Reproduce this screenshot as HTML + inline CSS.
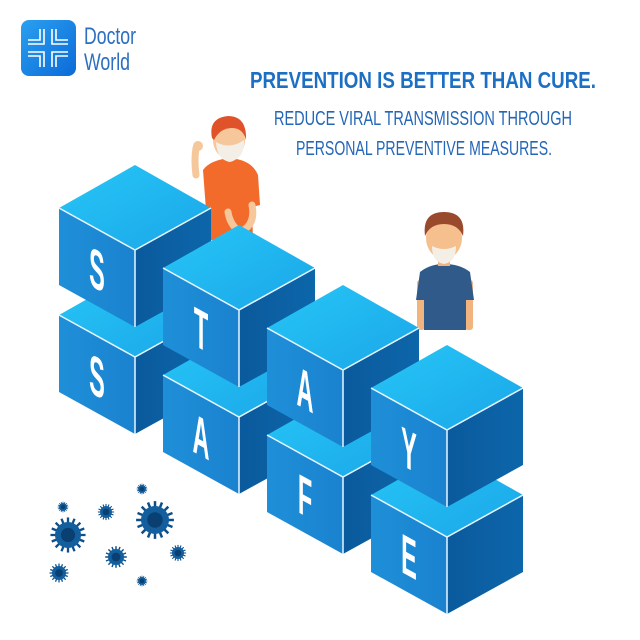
<!DOCTYPE html>
<html><head><meta charset="utf-8"><style>
html,body{margin:0;padding:0;background:#fff;width:640px;height:640px;overflow:hidden}
svg{display:block}
</style></head><body>
<svg width="640" height="640" viewBox="0 0 640 640" xmlns="http://www.w3.org/2000/svg">
<defs>
<linearGradient id="tg" x1="0" y1="0" x2="1" y2="1"><stop offset="0" stop-color="#27c6f7"/><stop offset="1" stop-color="#1aa6e8"/></linearGradient>
<linearGradient id="lg" x1="0" y1="0" x2="1" y2="0"><stop offset="0" stop-color="#1f8fd8"/><stop offset="1" stop-color="#1a82cf"/></linearGradient>
<linearGradient id="rg" x1="0" y1="0" x2="1" y2="0"><stop offset="0" stop-color="#0a5a9c"/><stop offset="1" stop-color="#0d66aa"/></linearGradient>
<linearGradient id="logo" x1="0" y1="0" x2="1" y2="1"><stop offset="0" stop-color="#2aa0f0"/><stop offset="1" stop-color="#0c6ad8"/></linearGradient>
<g id="cube">
<path d="M-76,-42 L0,-85 L76,-42 L0,0 Z" fill="url(#tg)"/>
<path d="M-76,-42 L0,0 L0,77 L-76,35 Z" fill="url(#lg)"/>
<path d="M0,0 L76,-42 L76,35 L0,77 Z" fill="url(#rg)"/>
<path d="M-76,-42 L0,0 L76,-42 M0,0 L0,77" stroke="#e8f7ff" stroke-width="1.5" fill="none"/>
</g>
<g id="virus" fill="#0d4f8a" stroke="#0d4f8a">
<g stroke-width="0.18">
<line x1="0" y1="-1.35" x2="0" y2="1.35"/><line x1="-1.35" y1="0" x2="1.35" y2="0"/>
<line x1="-0.95" y1="-0.95" x2="0.95" y2="0.95"/><line x1="-0.95" y1="0.95" x2="0.95" y2="-0.95"/>
<line x1="-0.5" y1="-1.25" x2="0.5" y2="1.25"/><line x1="-1.25" y1="-0.5" x2="1.25" y2="0.5"/>
<line x1="-0.5" y1="1.25" x2="0.5" y2="-1.25"/><line x1="-1.25" y1="0.5" x2="1.25" y2="-0.5"/>
</g>
<circle r="1" stroke="none" fill="#135f9e"/>
<circle r="0.55" stroke="none" fill="#0a3f72"/>
</g>
</defs>

<!-- logo -->
<rect x="21" y="20" width="55" height="56" rx="8" fill="url(#logo)"/>
<g stroke="#fff" stroke-width="1.6" fill="none">
<path d="M44,29 V44 H28 M40,29 V40 H28 M52,29 V44 H68 M56,29 V40 H68 M44,67 V52 H28 M40,67 V56 H28 M52,67 V52 H68 M56,67 V56 H68"/>
</g>
<text x="84" y="44" font-family="Liberation Sans, sans-serif" font-size="24" fill="#2c6fc0" textLength="52" lengthAdjust="spacingAndGlyphs">Doctor</text>
<text x="84" y="70" font-family="Liberation Sans, sans-serif" font-size="24" fill="#2c6fc0" textLength="46" lengthAdjust="spacingAndGlyphs">World</text>

<!-- headings -->
<text x="250" y="88" font-family="Liberation Sans, sans-serif" font-weight="bold" font-size="23" fill="#1d6fc4" textLength="346" lengthAdjust="spacingAndGlyphs">PREVENTION IS BETTER THAN CURE.</text>
<text x="274" y="125" font-family="Liberation Sans, sans-serif" font-size="20" fill="#2466b8" textLength="298" lengthAdjust="spacingAndGlyphs">REDUCE VIRAL TRANSMISSION THROUGH</text>
<text x="296" y="155" font-family="Liberation Sans, sans-serif" font-size="20" fill="#2466b8" textLength="256" lengthAdjust="spacingAndGlyphs">PERSONAL PREVENTIVE MEASURES.</text>

<!-- orange man -->
<g>
<path d="M196,175 Q194,160 196,148" stroke="#f6c79a" stroke-width="7" fill="none" stroke-linecap="round"/>
<circle cx="198" cy="146" r="5" fill="#f6c79a"/>
<path d="M203,170 Q210,160 230,158 Q252,160 258,175 L260,205 L252,207 L253,240 L208,240 L206,210 Z" fill="#f26b2a"/>
<path d="M252,205 Q256,225 240,232 Q230,225 228,212" stroke="#f6c79a" stroke-width="7" fill="none" stroke-linecap="round"/>
<ellipse cx="229" cy="140" rx="16" ry="19" fill="#f6c79a"/>
<path d="M212,138 Q208,118 228,116 Q247,116 246,140 Q243,128 232,128 Q220,128 214,140 Z" fill="#e0532a"/>
<path d="M216,142 Q230,150 244,140 Q245,158 230,162 Q217,160 216,142 Z" fill="#f3efe6"/>
</g>

<!-- boy -->
<g>
<rect x="417" y="280" width="8" height="50" rx="3" fill="#f2b47e"/>
<rect x="465" y="280" width="8" height="50" rx="3" fill="#f2b47e"/>
<path d="M420,272 Q430,264 444,264 Q460,264 470,272 L474,300 L466,300 L466,330 L424,330 L424,300 L416,300 Z" fill="#2f5a8a"/>
<rect x="438" y="256" width="12" height="10" fill="#f2b47e"/>
<ellipse cx="444" cy="238" rx="18" ry="21" fill="#f5c08e"/>
<path d="M425,236 Q422,212 444,212 Q466,212 463,236 Q458,224 444,224 Q430,224 425,236 Z" fill="#9a4a2c"/>
<path d="M432,246 Q444,252 456,246 Q456,262 444,264 Q432,262 432,246 Z" fill="#f3efe6"/>
</g>

<!-- cubes: back to front -->
<use href="#cube" x="135" y="357"/>
<use href="#cube" x="135" y="250"/>
<use href="#cube" x="239" y="417"/>
<use href="#cube" x="239" y="310"/>
<use href="#cube" x="343" y="477"/>
<use href="#cube" x="343" y="370"/>
<use href="#cube" x="447" y="537"/>
<use href="#cube" x="447" y="430"/>

<g font-family="Liberation Sans, sans-serif" font-weight="bold" font-size="56" fill="#fff" text-anchor="middle">
<g transform="translate(97,269) matrix(1,0.55,0,1,0,0) scale(0.42,1)"><text y="20">S</text></g>
<g transform="translate(97,376) matrix(1,0.55,0,1,0,0) scale(0.42,1)"><text y="20">S</text></g>
<g transform="translate(201,329) matrix(1,0.55,0,1,0,0) scale(0.42,1)"><text y="20">T</text></g>
<g transform="translate(201,436) matrix(1,0.55,0,1,0,0) scale(0.42,1)"><text y="20">A</text></g>
<g transform="translate(305,389) matrix(1,0.55,0,1,0,0) scale(0.42,1)"><text y="20">A</text></g>
<g transform="translate(305,496) matrix(1,0.55,0,1,0,0) scale(0.42,1)"><text y="20">F</text></g>
<g transform="translate(409,449) matrix(1,0.55,0,1,0,0) scale(0.42,1)"><text y="20">Y</text></g>
<g transform="translate(409,556) matrix(1,0.55,0,1,0,0) scale(0.42,1)"><text y="20">E</text></g>
</g>

<!-- viruses -->
<use href="#virus" transform="translate(155,520) scale(14)"/>
<use href="#virus" transform="translate(68,535) scale(13)"/>
<use href="#virus" transform="translate(106,512) scale(6)"/>
<use href="#virus" transform="translate(63,507) scale(4)"/>
<use href="#virus" transform="translate(142,489) scale(4)"/>
<use href="#virus" transform="translate(116,557) scale(8)"/>
<use href="#virus" transform="translate(178,553) scale(6)"/>
<use href="#virus" transform="translate(59,573) scale(7)"/>
<use href="#virus" transform="translate(142,581) scale(4)"/>
</svg>
</body></html>
